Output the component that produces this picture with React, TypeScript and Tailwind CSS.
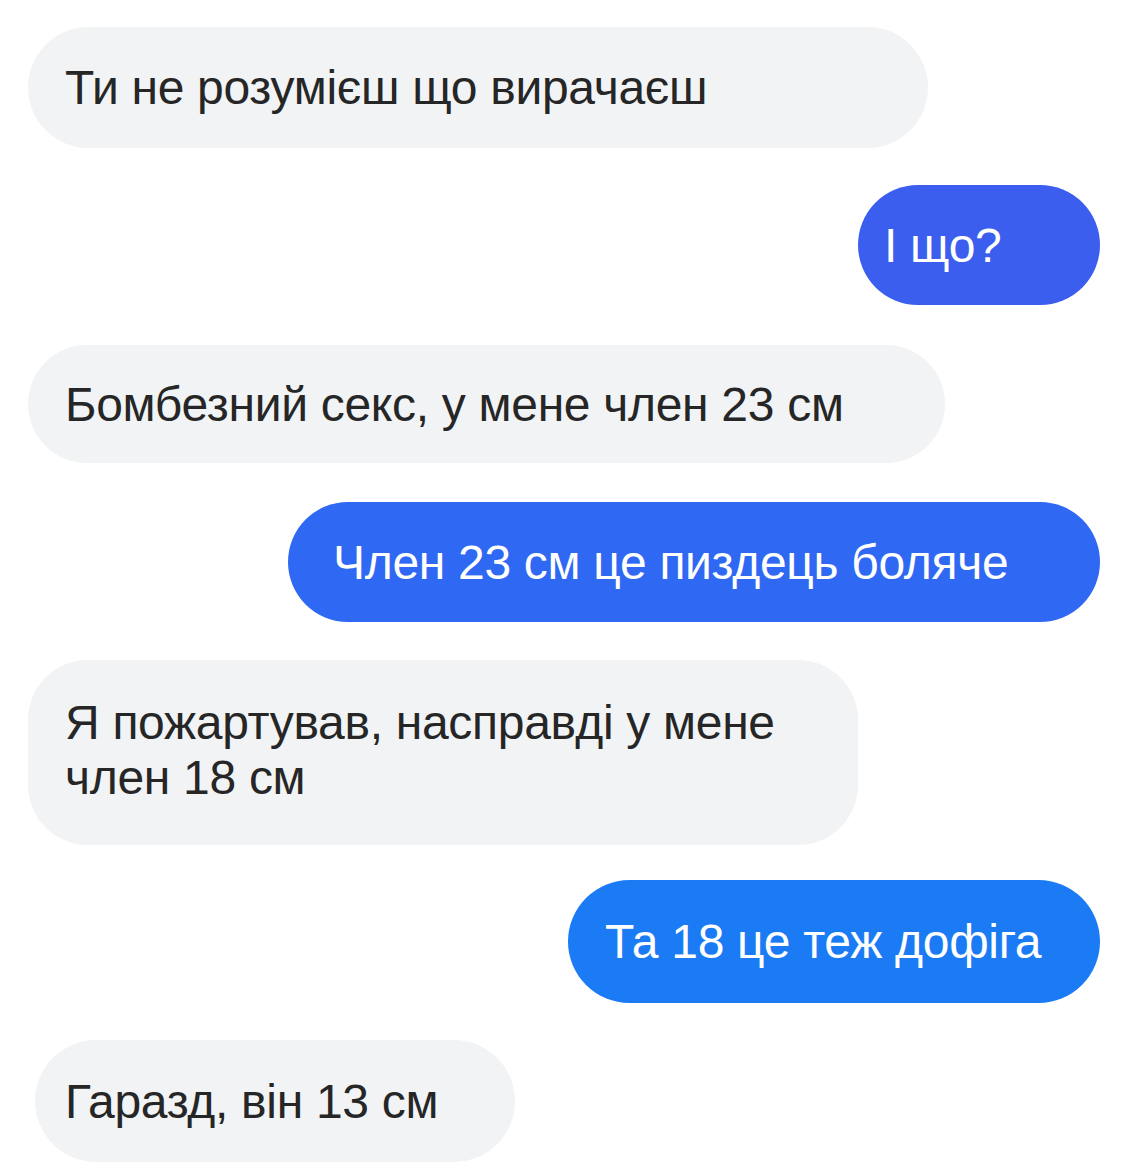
const messages = [
  { mine: false, text: 'Ти не розумієш що вирачаєш', box: 'mt-[27px] w-[900px] h-[121px] rounded-full pl-[37px]', bg: 'bg-[#f1f3f5]' },
  { mine: true, text: 'І що?', box: 'mt-[37px] w-[242px] h-[120px] rounded-full pl-[26px]', bg: 'bg-[#3b5eee]' },
  { mine: false, text: 'Бомбезний секс, у мене член 23 см', box: 'mt-[40px] w-[917px] h-[118px] rounded-full pl-[37px]', bg: 'bg-[#f1f3f5]' },
  { mine: true, text: 'Член 23 см це пиздець боляче', box: 'mt-[39px] w-[812px] h-[120px] rounded-full pl-[45px]', bg: 'bg-[#2f68f3]' },
  { mine: false, text: 'Я пожартував, насправді у мене\nчлен 18 см', box: 'mt-[38px] w-[830px] h-[185px] rounded-[60px] pl-[37px] pb-[6px]', bg: 'bg-[#f1f3f5]' },
  { mine: true, text: 'Та 18 це теж дофіга', box: 'mt-[35px] w-[532px] h-[123px] rounded-full pl-[37px]', bg: 'bg-[#1a7bf4]' },
  { mine: false, text: 'Гаразд, він 13 см', box: 'mt-[37px] w-[480px] h-[122px] rounded-full ml-[7px] pl-[30px]', bg: 'bg-[#f1f3f5]' },
];

export default function App() {
  return (
    <div
      className="w-[1125px] h-[1164px] overflow-hidden bg-white flex flex-col pl-[28px] pr-[25px]"
      style={{ fontFamily: '"Liberation Sans", Arial, sans-serif' }}
    >
      {messages.map((m, i) => (
        <div key={i} className={`flex shrink-0 ${m.mine ? 'justify-end' : 'justify-start'}`}>
          <div
            className={`${m.box} ${m.bg} flex items-center shrink-0 ${
              m.mine ? 'text-white' : 'text-[#262626]'
            }`}
          >
            <p className="text-[48px] leading-[55px] tracking-[-0.3px] whitespace-pre-line">{m.text}</p>
          </div>
        </div>
      ))}
    </div>
  );
}
